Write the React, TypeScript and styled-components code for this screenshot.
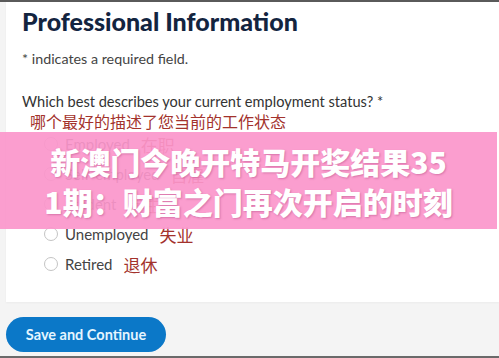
import styled, { createGlobalStyle } from "styled-components";

const GlobalStyle = createGlobalStyle`
  html, body {
    margin: 0;
    padding: 0;
    background: #f4f4f4;
    font-family: Lato, "Noto Sans", "Noto Sans CJK SC", sans-serif;
  }
`;

const options = [
  { en: "Employed", zh: "在职" },
  { en: "Self-employed", zh: "自雇" },
  { en: "Student", zh: "学生" },
  { en: "Unemployed", zh: "失业" },
  { en: "Retired", zh: "退休" },
];

function App() {
  return (
    <>
      <GlobalStyle />
      <Frame>
        <Card>
          <Title>Professional Information</Title>
          <Note>* indicates a required field.</Note>
          <Question>Which best describes your current employment status? *</Question>
          <QuestionZh>哪个最好的描述了您当前的工作状态</QuestionZh>
          <OptionList>
            {options.map((o) => (
              <Option key={o.en}>
                <Radio />
                <OptionText>{o.en}</OptionText>
                <OptionZh>{o.zh}</OptionZh>
              </Option>
            ))}
          </OptionList>
        </Card>
        <Footer>
          <SaveButton>Save and Continue</SaveButton>
        </Footer>
        <Banner>
          <BannerText>新澳门今晚开特马开奖结果35<br />1期：财富之门再次开启的时刻</BannerText>
        </Banner>
      </Frame>
    </>
  );
}

export default App;

const Frame = styled.div`
  position: relative;
  height: 358px;
  box-sizing: border-box;
  border-top: 2px solid #5a5a5a;
  border-bottom: 2px solid #6a6a6a;
  display: flex;
  flex-direction: column;
  overflow: hidden;
`;

const Card = styled.div`
  margin-left: 6px;
  height: 300px;
  background: #fff;
  padding: 0 16px;
  box-shadow: 0 1px 2px rgba(0, 0, 0, 0.04);
  display: flex;
  flex-direction: column;
`;

const Title = styled.h1`
  margin: 5px 0 0;
  font-size: 25px;
  line-height: 28px;
  font-weight: 900;
  color: #13243f;
`;

const Note = styled.div`
  margin-top: 16px;
  font-size: 14.3px;
  line-height: 16px;
  color: #444;
`;

const Question = styled.div`
  margin-top: 26px;
  font-size: 14.6px;
  line-height: 18px;
  color: #333;
`;

const QuestionZh = styled.div`
  margin-left: 8px;
  font-family: "Noto Sans CJK SC", sans-serif;
  font-size: 16px;
  line-height: 20px;
  color: #a3322c;
`;

const OptionList = styled.div`
  margin-top: -2px;
  display: flex;
  flex-direction: column;
`;

const Option = styled.div`
  height: 30px;
  display: flex;
  align-items: center;
  padding-left: 22px;
`;

const Radio = styled.span`
  width: 12px;
  height: 12px;
  border: 1px solid #c4c4c4;
  border-radius: 50%;
  background: #fff;
  margin-right: 7px;
`;

const OptionText = styled.span`
  font-size: 15px;
  color: #444;
  margin-right: 11px;
`;

const OptionZh = styled.span`
  font-family: "Noto Sans CJK SC", sans-serif;
  font-size: 17px;
  color: #a3322c;
`;

const Footer = styled.div`
  flex: 1;
  padding: 15px 0 0 6px;
`;

const SaveButton = styled.button`
  width: 160px;
  height: 35px;
  border: none;
  border-radius: 18px;
  background: #0b78c8;
  color: #e4f5ff;
  font-family: Lato, sans-serif;
  font-size: 14.5px;
  font-weight: 700;
  padding: 0;
`;

const Banner = styled.div`
  position: absolute;
  top: 130px;
  left: 0;
  width: 497px;
  height: 97px;
  background: rgba(251, 150, 203, 0.92);
  display: flex;
  align-items: center;
  justify-content: center;
`;

const BannerText = styled.div`
  font-family: "Noto Sans CJK SC", sans-serif;
  font-size: 30px;
  line-height: 40px;
  font-weight: 900;
  color: #fff;
  text-align: center;
  text-shadow: 1px 1px 2px rgba(150, 40, 100, 0.35);
`;
